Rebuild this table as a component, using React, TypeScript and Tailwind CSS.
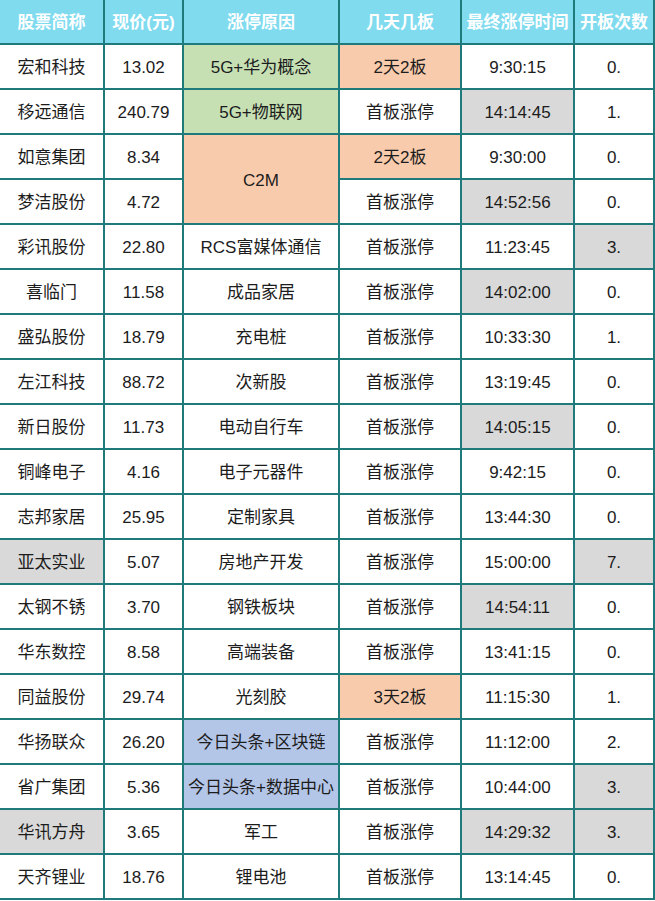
const headers = ['股票简称', '现价(元)', '涨停原因', '几天几板', '最终涨停时间', '开板次数']

type Row = {
  name: string
  price: string
  reason?: string
  reasonBg?: string
  boards: string
  boardsBg?: string
  time: string
  opens: string
  nameGray?: boolean
  timeGray?: boolean
  opensGray?: boolean
  span?: boolean
}

const GREEN = 'bg-[#c6e0b4]'
const ORANGE = 'bg-[#f8cbad]'
const BLUE = 'bg-[#b4c6e7]'

const rows: Row[] = [
  { name: '宏和科技', price: '13.02', reason: '5G+华为概念', reasonBg: GREEN, boards: '2天2板', boardsBg: ORANGE, time: '9:30:15', opens: '0.' },
  { name: '移远通信', price: '240.79', reason: '5G+物联网', reasonBg: GREEN, boards: '首板涨停', time: '14:14:45', timeGray: true, opens: '1.' },
  { name: '如意集团', price: '8.34', reason: 'C2M', reasonBg: ORANGE, span: true, boards: '2天2板', boardsBg: ORANGE, time: '9:30:00', opens: '0.' },
  { name: '梦洁股份', price: '4.72', boards: '首板涨停', time: '14:52:56', timeGray: true, opens: '0.' },
  { name: '彩讯股份', price: '22.80', reason: 'RCS富媒体通信', boards: '首板涨停', time: '11:23:45', opens: '3.', opensGray: true },
  { name: '喜临门', price: '11.58', reason: '成品家居', boards: '首板涨停', time: '14:02:00', timeGray: true, opens: '0.' },
  { name: '盛弘股份', price: '18.79', reason: '充电桩', boards: '首板涨停', time: '10:33:30', opens: '1.' },
  { name: '左江科技', price: '88.72', reason: '次新股', boards: '首板涨停', time: '13:19:45', opens: '0.' },
  { name: '新日股份', price: '11.73', reason: '电动自行车', boards: '首板涨停', time: '14:05:15', timeGray: true, opens: '0.' },
  { name: '铜峰电子', price: '4.16', reason: '电子元器件', boards: '首板涨停', time: '9:42:15', opens: '0.' },
  { name: '志邦家居', price: '25.95', reason: '定制家具', boards: '首板涨停', time: '13:44:30', opens: '0.' },
  { name: '亚太实业', price: '5.07', reason: '房地产开发', boards: '首板涨停', time: '15:00:00', opens: '7.', nameGray: true, opensGray: true },
  { name: '太钢不锈', price: '3.70', reason: '钢铁板块', boards: '首板涨停', time: '14:54:11', timeGray: true, opens: '0.' },
  { name: '华东数控', price: '8.58', reason: '高端装备', boards: '首板涨停', time: '13:41:15', opens: '0.' },
  { name: '同益股份', price: '29.74', reason: '光刻胶', boards: '3天2板', boardsBg: ORANGE, time: '11:15:30', opens: '1.' },
  { name: '华扬联众', price: '26.20', reason: '今日头条+区块链', reasonBg: BLUE, boards: '首板涨停', time: '11:12:00', opens: '2.' },
  { name: '省广集团', price: '5.36', reason: '今日头条+数据中心', reasonBg: BLUE, boards: '首板涨停', time: '10:44:00', opens: '3.', opensGray: true },
  { name: '华讯方舟', price: '3.65', reason: '军工', boards: '首板涨停', time: '14:29:32', timeGray: true, opens: '3.', nameGray: true, opensGray: true },
  { name: '天齐锂业', price: '18.76', reason: '锂电池', boards: '首板涨停', time: '13:14:45', opens: '0.' },
]

function Cell({ children, bg = 'bg-white', className = '' }: { children: React.ReactNode; bg?: string; className?: string }) {
  return (
    <div className={`flex items-center justify-center whitespace-nowrap pt-[3px] text-[17px] text-[#1c1c1c] ${bg} ${className}`}>
      {children}
    </div>
  )
}

export default function App() {
  return (
    <div
      className="grid w-[655px] grid-cols-[103px_77px_154px_120px_111px_78px] auto-rows-[43px] gap-[2px] bg-[#1f7b7b] pr-[2px] pb-[2px]"
      style={{ fontFamily: '"Liberation Sans", "Noto Sans CJK SC", sans-serif' }}
    >
      {/* header */}
      {headers.map((h) => (
        <div
          key={h}
          className="flex items-center justify-center whitespace-nowrap bg-[#80dbef] pt-[3px] text-[17px] font-bold text-white"
        >
          {h}
        </div>
      ))}

      {rows.map((r) => [
        <Cell key={r.name + 'n'} bg={r.nameGray ? 'bg-[#d9d9d9]' : 'bg-white'}>{r.name}</Cell>,
        <Cell key={r.name + 'p'}>{r.price}</Cell>,
        r.reason !== undefined ? (
          <Cell key={r.name + 'r'} bg={r.reasonBg ?? 'bg-white'} className={r.span ? 'row-span-2' : ''}>
            {r.reason}
          </Cell>
        ) : null,
        <Cell key={r.name + 'b'} bg={r.boardsBg ?? 'bg-white'}>{r.boards}</Cell>,
        <Cell key={r.name + 't'} bg={r.timeGray ? 'bg-[#d9d9d9]' : 'bg-white'}>{r.time}</Cell>,
        <Cell key={r.name + 'o'} bg={r.opensGray ? 'bg-[#d9d9d9]' : 'bg-white'}>{r.opens}</Cell>,
      ])}
    </div>
  )
}
